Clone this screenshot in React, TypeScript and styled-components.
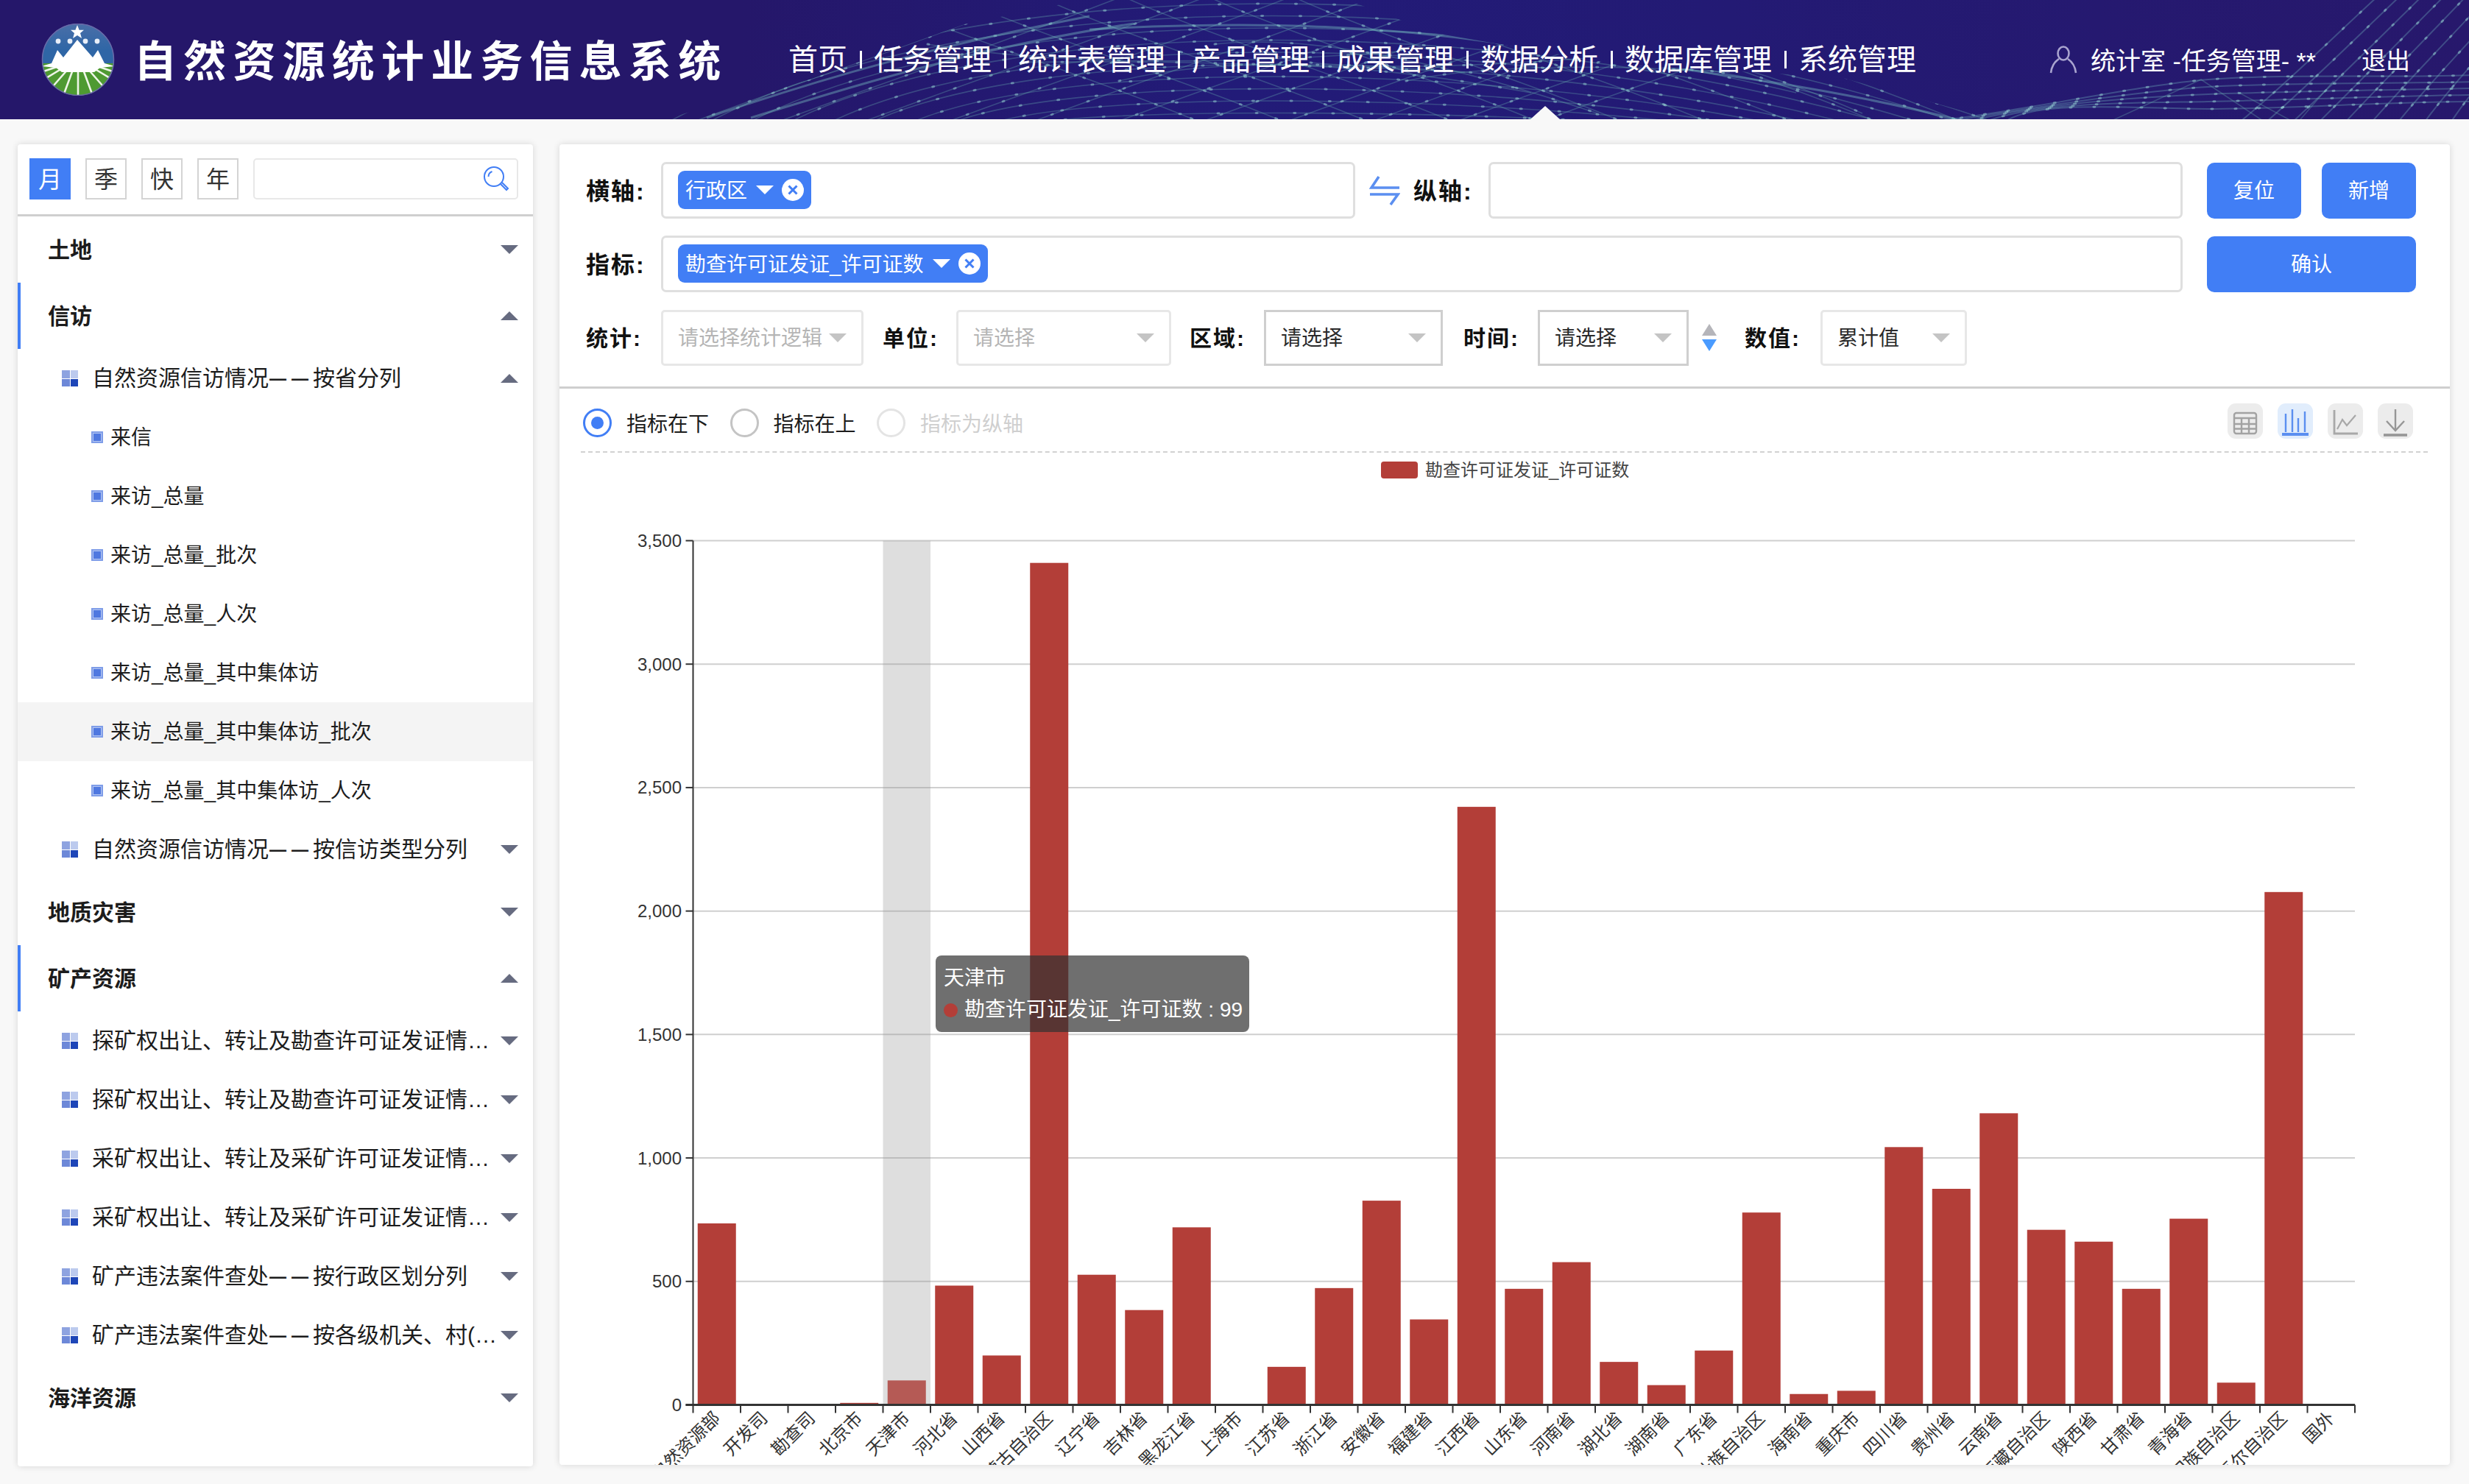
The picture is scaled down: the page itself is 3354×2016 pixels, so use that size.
import React from 'react';
import styled, { createGlobalStyle } from 'styled-components';

const GlobalStyle = createGlobalStyle`
  html, body {
    margin: 0;
    padding: 0;
    background: #f8f8f8;
    font-family: "Liberation Sans", "Noto Sans CJK SC", sans-serif;
    color: #222;
  }
  * { box-sizing: border-box; }
`;

const BLUE = '#417ef5';
const BAR = '#b33e38';

const Page = styled.div`
  width: 3354px;
  height: 2016px;
  overflow: hidden;
`;

const Header = styled.header`
  position: relative;
  height: 162px;
  display: flex;
  align-items: center;
  padding: 0 80px 0 56px;
  overflow: hidden;
  color: #fff;
  background: linear-gradient(90deg, #25176a 0%, #25176a 30%, #221b78 50%, #231a74 70%, #27186c 100%);
`;

const HeaderArt = styled.svg`
  position: absolute;
  left: 0;
  top: 0;
`;

const LogoBox = styled.div`
  position: relative;
  width: 100px;
  height: 98px;
  flex: none;
`;

const Title = styled.div`
  position: relative;
  width: 889px;
  margin-left: 26px;
  padding-bottom: 4px;
  flex: none;
  font-size: 58px;
  font-weight: 700;
  letter-spacing: 9.2px;
  white-space: nowrap;
`;

const Nav = styled.nav`
  position: relative;
  display: flex;
  align-items: center;
  flex: none;
`;

const NavItem = styled.div<{ $active?: boolean }>`
  position: relative;
  font-size: 40px;
  line-height: 162px;
  white-space: nowrap;
  &::after {
    content: '';
    display: ${(p) => (p.$active ? 'block' : 'none')};
    position: absolute;
    left: 68px;
    bottom: 0;
    border-left: 20px solid transparent;
    border-right: 20px solid transparent;
    border-bottom: 18px solid #f8f8f8;
  }
`;

const NavSep = styled.span`
  width: 3px;
  height: 24px;
  margin: 0 16px 0 17px;
  background: #fff;
  flex: none;
`;

const UserBlock = styled.div`
  position: relative;
  margin-left: auto;
  display: flex;
  align-items: center;
  font-size: 34px;
  white-space: nowrap;
`;

const UserName = styled.span`
  margin-left: 18px;
  padding-bottom: 2px;
`;

const Logout = styled.span`
  margin-left: 62px;
  padding-bottom: 2px;
  font-size: 33px;
`;

const Body = styled.div`
  display: flex;
  align-items: flex-start;
  padding: 34px 0 0 24px;
  gap: 36px;
`;

const Sidebar = styled.aside`
  width: 700px;
  height: 1796px;
  flex: none;
  background: #fff;
  border-radius: 4px;
  box-shadow: 0 0 10px rgba(0, 0, 0, 0.14);
  overflow: hidden;
`;

const SideTop = styled.div`
  display: flex;
  align-items: center;
  height: 98px;
  padding: 20px 20px 22px 16px;
  border-bottom: 3px solid #cfcfcf;
`;

const Period = styled.div<{ $active?: boolean }>`
  width: 56px;
  height: 56px;
  margin-right: 20px;
  padding-bottom: 3px;
  flex: none;
  display: flex;
  align-items: center;
  justify-content: center;
  font-size: 32px;
  color: ${(p) => (p.$active ? '#fff' : '#333')};
  background: ${(p) => (p.$active ? BLUE : '#fff')};
  border: 2px solid ${(p) => (p.$active ? BLUE : '#d4d4d4')};
`;

const SearchBox = styled.div`
  flex: 1;
  height: 56px;
  display: flex;
  align-items: center;
  justify-content: flex-end;
  padding-right: 10px;
  border: 2px solid #e8e8e8;
  border-radius: 5px;
`;

const Row = styled.div<{ $level: 1 | 2 | 3; $bar?: boolean; $hover?: boolean }>`
  display: flex;
  align-items: center;
  height: ${(p) => (p.$level === 1 ? 90 : 80)}px;
  padding-right: 20px;
  padding-left: ${(p) => (p.$level === 1 ? 41 : p.$level === 2 ? 60 : 100)}px;
  font-size: ${(p) => (p.$level === 3 ? 28 : 30)}px;
  font-weight: ${(p) => (p.$level === 1 ? 700 : 400)};
  color: #1c1c1c;
  background: ${(p) => (p.$hover ? '#f4f4f4' : 'transparent')};
  box-shadow: ${(p) => (p.$bar ? `inset 4px 0 0 ${BLUE}` : 'none')};
`;

const RowText = styled.span<{ $level: 1 | 2 | 3 }>`
  flex: 1;
  min-width: 0;
  margin-left: ${(p) => (p.$level === 1 ? 0 : p.$level === 2 ? 19 : 10)}px;
  margin-right: 2px;
  padding-bottom: ${(p) => (p.$level === 2 ? 7 : 4)}px;
  white-space: nowrap;
  overflow: hidden;
  text-overflow: ellipsis;
`;

const Dash = styled.span`
  font-size: 23px;
  font-weight: 700;
  letter-spacing: 7px;
  margin-left: 1px;
  margin-right: -1px;
  vertical-align: 2px;
`;

const Caret = styled.i<{ $up?: boolean }>`
  flex: none;
  width: 0;
  height: 0;
  border-left: 12px solid transparent;
  border-right: 12px solid transparent;
  ${(p) => (p.$up ? 'border-bottom: 12px solid #666b80;' : 'border-top: 12px solid #666b80;')}
`;

const GroupIcon = styled.i`
  flex: none;
  width: 22px;
  height: 22px;
  display: grid;
  grid-template-columns: 1fr 1fr;
  grid-template-rows: 1fr 1fr;
  gap: 1px;
`;

const GroupCell = styled.b<{ $c: string }>`
  background: ${(p) => p.$c};
`;

const LeafIcon = styled.i`
  flex: none;
  width: 16px;
  height: 16px;
  background: #4f78e0;
  border: 2px solid #7f9de8;
  box-shadow: inset 0 0 0 1px #b4c6f2;
`;

const Main = styled.main`
  width: 2568px;
  height: 1794px;
  flex: none;
  display: flex;
  flex-direction: column;
  background: #fff;
  border-radius: 4px;
  box-shadow: 0 0 10px rgba(0, 0, 0, 0.14);
  overflow: hidden;
`;

const Filters = styled.section`
  height: 332px;
  flex: none;
  display: flex;
  flex-direction: column;
  gap: 23px;
  padding: 24px 46px 0 36px;
  border-bottom: 3px solid #cfcfcf;
`;

const FilterRow = styled.div`
  display: flex;
  align-items: center;
  height: 77px;
  flex: none;
`;

const Label = styled.label<{ $w: number; $ml?: number; $size?: number }>`
  width: ${(p) => p.$w}px;
  margin-left: ${(p) => p.$ml || 0}px;
  padding-bottom: 4px;
  flex: none;
  font-size: ${(p) => p.$size || 30}px;
  font-weight: 700;
  letter-spacing: 2px;
  color: #111;
  white-space: nowrap;
`;

const AxisBox = styled.div<{ $w: number }>`
  width: ${(p) => p.$w}px;
  height: 77px;
  flex: none;
  display: flex;
  align-items: center;
  padding-left: 20px;
  border: 3px solid #dfdfdf;
  border-radius: 7px;
`;

const Tag = styled.span`
  display: inline-flex;
  align-items: center;
  height: 52px;
  margin-top: -1px;
  padding: 0 10px;
  background: ${BLUE};
  border-radius: 9px;
  color: #fff;
  font-size: 28px;
  white-space: nowrap;
`;

const TagText = styled.span`
  padding-bottom: 3px;
`;

const TagCaret = styled.i`
  width: 0;
  height: 0;
  margin: 0 11px 0 12px;
  border-left: 12px solid transparent;
  border-right: 12px solid transparent;
  border-top: 12px solid #fff;
`;

const SwapSlot = styled.span`
  width: 42px;
  height: 40px;
  margin: 0 18px 0 19px;
  flex: none;
  display: flex;
`;

const PrimaryButton = styled.button<{ $w: number; $ml: number }>`
  width: ${(p) => p.$w}px;
  height: 76px;
  margin-left: ${(p) => p.$ml}px;
  flex: none;
  padding: 0 0 4px;
  border: 0;
  border-radius: 10px;
  background: ${BLUE};
  color: #fff;
  font-family: inherit;
  font-size: 28px;
`;

const Select = styled.div<{ $w: number; $square?: boolean; $dim?: boolean }>`
  width: ${(p) => p.$w}px;
  height: 76px;
  flex: none;
  display: flex;
  align-items: center;
  justify-content: space-between;
  padding: 0 20px;
  border: ${(p) => (p.$square ? '3px solid #cfcfcf' : '3px solid #e7e7e7')};
  border-radius: ${(p) => (p.$square ? 0 : 5)}px;
  font-size: 28px;
  color: ${(p) => (p.$dim ? '#b5b5b5' : '#2a2a2a')};
  white-space: nowrap;
`;

const SelectText = styled.span`
  padding-bottom: 4px;
`;

const SelectCaret = styled.i`
  flex: none;
  width: 0;
  height: 0;
  border-left: 12px solid transparent;
  border-right: 12px solid transparent;
  border-top: 12px solid #c4c4c4;
`;

const SortArrows = styled.div`
  width: 21px;
  margin-left: 18px;
  flex: none;
  display: flex;
  flex-direction: column;
  gap: 5px;
`;

const SortArrow = styled.i<{ $down?: boolean }>`
  width: 0;
  height: 0;
  border-left: 10.5px solid transparent;
  border-right: 10.5px solid transparent;
  ${(p) => (p.$down ? 'border-top: 16px solid #4a9bff;' : 'border-bottom: 16px solid #b5b5ba;')}
`;

const Toolbar = styled.div`
  height: 87px;
  flex: none;
  margin: 0 30px 0 29px;
  padding: 8px 20px 0 3px;
  display: flex;
  align-items: center;
  border-bottom: 2px dashed #d2d2d2;
`;

const RadioItem = styled.div<{ $off?: boolean }>`
  display: flex;
  align-items: center;
  margin-right: 28.500px;
  font-size: 28px;
  color: ${(p) => (p.$off ? '#cfcfcf' : '#1c1c1c')};
`;

const RadioText = styled.span`
  padding-bottom: 2px;
`;

const RadioDot = styled.i<{ $on?: boolean; $off?: boolean }>`
  width: 39px;
  height: 39px;
  margin-right: 20px;
  flex: none;
  display: flex;
  align-items: center;
  justify-content: center;
  border-radius: 50%;
  border: 3px solid ${(p) => (p.$on ? BLUE : p.$off ? '#e4e4e4' : '#c4c4c4')};
  &::after {
    content: '';
    display: ${(p) => (p.$on ? 'block' : 'none')};
    width: 17px;
    height: 17px;
    border-radius: 50%;
    background: ${BLUE};
  }
`;

const ToolIcons = styled.div`
  margin-left: auto;
  margin-bottom: 5px;
  display: flex;
  gap: 20px;
`;

const ToolIcon = styled.div<{ $active?: boolean }>`
  width: 48px;
  height: 48px;
  border-radius: 11px;
  display: flex;
  background: ${(p) => (p.$active ? '#e1edfc' : '#ececec')};
`;

const ChartWrap = styled.div`
  position: relative;
  flex: 1;
  min-height: 0;
  overflow: hidden;
`;

const ChartSvg = styled.svg`
  display: block;
  font-family: "Liberation Sans", "Noto Sans CJK SC", sans-serif;
`;

const Tooltip = styled.div`
  position: absolute;
  left: 511px;
  top: 683px;
  width: 426px;
  height: 104px;
  padding: 10px 11px;
  border-radius: 8px;
  background: rgba(50, 50, 50, 0.7);
  color: #fff;
  font-size: 28px;
  line-height: 42px;
  white-space: nowrap;
`;

const TipRow = styled.div`
  display: flex;
  align-items: center;
  margin-top: 1px;
`;

const TipDot = styled.i`
  width: 19px;
  height: 19px;
  margin-right: 9px;
  flex: none;
  border-radius: 50%;
  background: ${BAR};
`;

// header background: a net of thin curves with brighter dotted strands
function buildNet() {
  const lines: string[] = [];
  const bright: string[] = [];
  for (let i = 0; i < 10; i++) {
    const top = -50 + i * 22;
    lines.push(`M${900 + i * 55} 170 C${1300 + i * 20} ${top} ${2100 - i * 20} ${top} ${2720 - i * 50} 170`);
  }
  for (let i = 0; i < 12; i++) {
    lines.push(`M${1180 + i * 115} -5 C${1300 + i * 115} 50 ${1500 + i * 115} 110 ${1640 + i * 115} 170`);
    lines.push(`M${2560 - i * 115} -5 C${2420 - i * 115} 50 ${2240 - i * 115} 110 ${2080 - i * 115} 170`);
  }
  for (let i = 0; i < 8; i++) {
    lines.push(`M${1260 + i * 130} ${60 + (i % 3) * 25} Q${1500 + i * 110} ${100 - (i % 4) * 20} ${1900 + i * 90} ${70 + (i % 4) * 28}`);
  }
  bright.push('M960 160 C1120 105 1280 60 1480 22');
  bright.push('M1020 160 C1180 110 1340 62 1540 32');
  bright.push('M1480 40 C1700 28 1900 32 2120 72 C2300 95 2500 120 2680 168');
  const right: string[] = [];
  for (let i = 0; i < 5; i++) {
    right.push(`M${2600 + i * 30} 168 C2760 ${150 - i * 4} 2900 ${116 + i * 8} 3000 ${108 + i * 10} S3250 ${106 + i * 8} 3360 ${102 + i * 9}`);
  }
  for (let i = 0; i < 9; i++) {
    right.push(`M${3040 + i * 36} 168 C${3110 + i * 32} 110 ${3170 + i * 32} 50 ${3230 + i * 30} -5`);
  }
  return { lines, bright, right };
}

function HeaderNet() {
  const { lines, bright, right } = buildNet();
  return (
    <HeaderArt width="3354" height="162" viewBox="0 0 3354 162" fill="none">
      <defs>
        <clipPath id="netArea">
          <path d="M890 165 L1100 108 L1310 33 L1470 0 L1830 0 L1950 45 L2200 88 L2500 105 L2720 165 Z" />
        </clipPath>
      </defs>
      <g clipPath="url(#netArea)">
        {lines.map((d) => (
          <path key={d} d={d} stroke="#6db8b4" strokeOpacity="0.3" strokeWidth="1.6" />
        ))}
        {lines.map((d) => (
          <path key={`dot-${d}`} d={d} stroke="#a6e6e0" strokeOpacity="0.45" strokeWidth="3" strokeDasharray="2 50" strokeLinecap="round" />
        ))}
        {bright.map((d) => (
          <path key={d} d={d} stroke="#7cc8c6" strokeOpacity="0.4" strokeWidth="3" />
        ))}
      </g>
      {right.map((d) => (
        <path key={d} d={d} stroke="#7cc8c6" strokeOpacity="0.3" strokeWidth="2" />
      ))}
      {right.map((d) => (
        <path key={`dot-${d}`} d={d} stroke="#a6e6e0" strokeOpacity="0.45" strokeWidth="3" strokeDasharray="2 30" strokeLinecap="round" />
      ))}
      <path d="M2860 168 L2990 108 L3080 168 M3040 125 L3120 168 L3170 110" stroke="#6db8b4" strokeOpacity="0.3" strokeWidth="1.6" />
    </HeaderArt>
  );
}

function Logo() {
  return (
    <LogoBox>
      <svg width="100" height="98" viewBox="0 0 100 98">
        <defs>
          <linearGradient id="sky" x1="0" y1="0" x2="0" y2="1">
            <stop offset="0" stopColor="#4a6fa8" />
            <stop offset="0.6" stopColor="#2f66a6" />
          </linearGradient>
          <clipPath id="disc">
            <ellipse cx="50" cy="49" rx="49" ry="49" />
          </clipPath>
        </defs>
        <g clipPath="url(#disc)">
          <rect width="100" height="60" fill="url(#sky)" />
          <rect y="54" width="100" height="44" fill="#4e9a32" />
          <g stroke="#eef5e8" strokeWidth="2.6">
            <path d="M50 60 L50 98 M44 60 L30 98 M56 60 L70 98 M38 60 L10 92 M62 60 L90 92 M30 60 L0 78 M70 60 L100 78 M24 58 L0 66 M76 58 L100 66" />
          </g>
          <polygon points="0,58 14,54 22,36 30,46 49,22 70,46 77,36 86,54 100,58 80,60 72,66 28,66 20,60" fill="#fff" />
          <polygon points="49,2 51.6,8.8 58,8.8 53,13 55,20 49,16 43,20 45,13 40,8.8 46.4,8.8" fill="#fff" />
          <g fill="#e8eef8">
            <circle cx="23" cy="24" r="3.4" />
            <circle cx="39" cy="24" r="3.4" />
            <circle cx="60" cy="24" r="3.4" />
            <circle cx="76" cy="24" r="3.4" />
          </g>
        </g>
        <ellipse cx="50" cy="49" rx="48.5" ry="48.5" fill="none" stroke="#6a6aa8" strokeWidth="1.5" />
      </svg>
    </LogoBox>
  );
}

function UserIcon() {
  return (
    <svg width="38" height="38" viewBox="0 0 38 38" fill="none" stroke="#a9a4cf" strokeWidth="2.6">
      <ellipse cx="19" cy="10.5" rx="7.5" ry="9" />
      <path d="M13 18 C7 22 3 28 2 37 M25 18 C31 22 35 28 36 37" />
    </svg>
  );
}

function SearchIcon() {
  return (
    <svg width="36" height="36" viewBox="0 0 36 36" fill="none" stroke={BLUE} strokeWidth="2">
      <circle cx="15" cy="15" r="13" />
      <path d="M7.5 15 a7.5 7.5 0 0 1 5 -7" />
      <path d="M24 25 L32 33 L34 31 L26 23" />
    </svg>
  );
}

function SwapIcon() {
  return (
    <svg width="42" height="40" viewBox="0 0 42 40" fill="none" stroke="#5b8ff0" strokeWidth="3.6">
      <path d="M41 16 H3 L13 1" />
      <path d="M1 25 H39 L29 39" />
    </svg>
  );
}

function TagClose() {
  return (
    <svg width="30" height="30" viewBox="0 0 30 30">
      <circle cx="15" cy="15" r="15" fill="#fff" />
      <path d="M9.5 9.5 L20.5 20.5 M20.5 9.5 L9.5 20.5" stroke={BLUE} strokeWidth="3" />
    </svg>
  );
}

function TableIcon() {
  return (
    <svg width="48" height="48" viewBox="0 0 48 48" fill="none" stroke="#a2a2a2" strokeWidth="2.4">
      <rect x="9" y="13" width="30" height="28" rx="3" />
      <path d="M9 20 H39 M9 28 H39 M9 34.500 H39 M19 20 V41 M29 20 V41" />
    </svg>
  );
}

function BarsIcon() {
  return (
    <svg width="48" height="48" viewBox="0 0 48 48" fill="none" stroke="#5b8ff0">
      <path d="M11 39 V14 M20 39 V8 M28 39 V20 M37 39 V11" strokeWidth="2.4" />
      <path d="M6 42 H42" strokeWidth="4" />
    </svg>
  );
}

function LineIcon() {
  return (
    <svg width="48" height="48" viewBox="0 0 48 48" fill="none" stroke="#a8a8a8" strokeWidth="2.2">
      <path d="M9 9 V41 H41" strokeWidth="2.8" />
      <path d="M13 35 L20 22 L26 30 L38 16" />
    </svg>
  );
}

function DownloadIcon() {
  return (
    <svg width="48" height="48" viewBox="0 0 48 48" fill="none" stroke="#969696" strokeWidth="2.4">
      <path d="M24 8 V37 M12 24 L24 37 L36 24" />
      <path d="M8 43 H40" strokeWidth="3.6" />
    </svg>
  );
}

type Item = { level: 1 | 2 | 3; text: string; open?: boolean; bar?: boolean; hover?: boolean };

const tree: Item[] = [
  { level: 1, text: '土地' },
  { level: 1, text: '信访', open: true, bar: true },
  { level: 2, text: '自然资源信访情况——按省分列', open: true },
  { level: 3, text: '来信' },
  { level: 3, text: '来访_总量' },
  { level: 3, text: '来访_总量_批次' },
  { level: 3, text: '来访_总量_人次' },
  { level: 3, text: '来访_总量_其中集体访' },
  { level: 3, text: '来访_总量_其中集体访_批次', hover: true },
  { level: 3, text: '来访_总量_其中集体访_人次' },
  { level: 2, text: '自然资源信访情况——按信访类型分列' },
  { level: 1, text: '地质灾害' },
  { level: 1, text: '矿产资源', open: true, bar: true },
  { level: 2, text: '探矿权出让、转让及勘查许可证发证情况——按行政区划分列' },
  { level: 2, text: '探矿权出让、转让及勘查许可证发证情况——按矿种分列' },
  { level: 2, text: '采矿权出让、转让及采矿许可证发证情况——按行政区划分列' },
  { level: 2, text: '采矿权出让、转让及采矿许可证发证情况——按矿种分列' },
  { level: 2, text: '矿产违法案件查处——按行政区划分列' },
  { level: 2, text: '矿产违法案件查处——按各级机关、村(组)分列' },
  { level: 1, text: '海洋资源' },
];

const navItems = ['首页', '任务管理', '统计表管理', '产品管理', '成果管理', '数据分析', '数据库管理', '系统管理'];

const chartData: [string, number][] = [
  ['自然资源部', 735], ['开发司', 0], ['勘查司', 0], ['北京市', 8], ['天津市', 99], ['河北省', 483], ['山西省', 200],
  ['内蒙古自治区', 3410], ['辽宁省', 527], ['吉林省', 384], ['黑龙江省', 719], ['上海市', 0], ['江苏省', 154],
  ['浙江省', 473], ['安徽省', 827], ['福建省', 346], ['江西省', 2422], ['山东省', 470], ['河南省', 578],
  ['湖北省', 174], ['湖南省', 80], ['广东省', 220], ['广西壮族自治区', 779], ['海南省', 44], ['重庆市', 57],
  ['四川省', 1044], ['贵州省', 875], ['云南省', 1181], ['西藏自治区', 709], ['陕西省', 661], ['甘肃省', 470],
  ['青海省', 754], ['宁夏回族自治区', 90], ['新疆维吾尔自治区', 2077], ['国外', 0],
];

const AXIS_X = 941.5;
const AXIS_RIGHT = 3199;
const ZERO_Y = 1910.5;
const TOP_Y = 736.5;
const STEP = (AXIS_RIGHT - AXIS_X) / chartData.length;
const yOf = (v: number) => ZERO_Y - (v / 3500) * (ZERO_Y - TOP_Y);

function BarChart() {
  const ticks = [0, 500, 1000, 1500, 2000, 2500, 3000, 3500];
  return (
    <ChartSvg width="2568" height="1375" viewBox="760 617 2568 1375">
      <rect x="1876" y="629" width="50" height="23" rx="4" fill={BAR} />
      <text x="1936" y="640" fontSize="24" fill="#444" dominantBaseline="central">勘查许可证发证_许可证数</text>
      {ticks.map((t) => (
        <g key={t}>
          {t > 0 && <line x1={AXIS_X} x2={AXIS_RIGHT} y1={yOf(t)} y2={yOf(t)} stroke="#cfcfcf" strokeWidth="2" />}
          <line x1={AXIS_X - 10} x2={AXIS_X} y1={yOf(t)} y2={yOf(t)} stroke="#333" strokeWidth="2" />
          <text x="926" y={yOf(t)} fontSize="24" fill="#333" textAnchor="end" dominantBaseline="central">
            {t.toLocaleString('en-US')}
          </text>
        </g>
      ))}
      <rect x={AXIS_X + STEP * 4} y={TOP_Y} width={STEP} height={ZERO_Y - TOP_Y} fill="#969696" fillOpacity="0.31" />
      {chartData.map(([name, v], i) => (
        v > 0 && (
          <rect
            key={name}
            x={AXIS_X + STEP * i + 6.25}
            y={yOf(v)}
            width="52"
            height={ZERO_Y - yOf(v)}
            fill={i === 4 ? '#b55a55' : BAR}
          />
        )
      ))}
      <line x1={AXIS_X} x2={AXIS_X} y1={TOP_Y} y2={ZERO_Y} stroke="#333" strokeWidth="2" />
      <line x1={AXIS_X - 10} x2={AXIS_RIGHT} y1={ZERO_Y} y2={ZERO_Y} stroke="#333" strokeWidth="3" />
      {chartData.map(([name], i) => (
        <line key={name} x1={AXIS_X + STEP * i} x2={AXIS_X + STEP * i} y1={ZERO_Y} y2={ZERO_Y + 11} stroke="#333" strokeWidth="2" />
      ))}
      <line x1={AXIS_RIGHT} x2={AXIS_RIGHT} y1={ZERO_Y} y2={ZERO_Y + 11} stroke="#333" strokeWidth="2" />
      {chartData.map(([name], i) => {
        const cx = AXIS_X + STEP * (i + 0.5) + 6;
        return (
          <text key={name} x={cx} y={1930} fontSize="24" fill="#333" textAnchor="end" transform={`rotate(-45 ${cx} 1930)`}>
            {name}
          </text>
        );
      })}
    </ChartSvg>
  );
}

function TreeText({ text }: { text: string }) {
  const parts = text.split('——');
  if (parts.length < 2) return <>{text}</>;
  return (
    <>
      {parts[0]}
      <Dash>——</Dash>
      {parts[1]}
    </>
  );
}

function App() {
  return (
    <Page>
      <GlobalStyle />
      <Header>
        <HeaderNet />
        <Logo />
        <Title>自然资源统计业务信息系统</Title>
        <Nav>
          {navItems.map((item, i) => (
            <React.Fragment key={item}>
              {i > 0 && <NavSep />}
              <NavItem $active={item === '数据分析'}>{item}</NavItem>
            </React.Fragment>
          ))}
        </Nav>
        <UserBlock>
          <UserIcon />
          <UserName>统计室 -任务管理- **</UserName>
          <Logout>退出</Logout>
        </UserBlock>
      </Header>
      <Body>
        <Sidebar>
          <SideTop>
            <Period $active>月</Period>
            <Period>季</Period>
            <Period>快</Period>
            <Period>年</Period>
            <SearchBox>
              <SearchIcon />
            </SearchBox>
          </SideTop>
          {tree.map((item) => (
            <Row key={item.text} $level={item.level} $bar={item.bar} $hover={item.hover}>
              {item.level === 2 && (
                <GroupIcon>
                  <GroupCell $c="#8ea3e0" />
                  <GroupCell $c="#bccaee" />
                  <GroupCell $c="#6d88d8" />
                  <GroupCell $c="#1e46b8" />
                </GroupIcon>
              )}
              {item.level === 3 && <LeafIcon />}
              <RowText $level={item.level}><TreeText text={item.text} /></RowText>
              {item.level !== 3 && <Caret $up={item.open} />}
            </Row>
          ))}
        </Sidebar>
        <Main>
          <Filters>
            <FilterRow>
              <Label $w={102} $size={32}>横轴:</Label>
              <AxisBox $w={943}>
                <Tag><TagText>行政区</TagText><TagCaret /><TagClose /></Tag>
              </AxisBox>
              <SwapSlot><SwapIcon /></SwapSlot>
              <Label $w={102} $size={32}>纵轴:</Label>
              <AxisBox $w={943} />
              <PrimaryButton $w={128} $ml={33}>复位</PrimaryButton>
              <PrimaryButton $w={128} $ml={28}>新增</PrimaryButton>
            </FilterRow>
            <FilterRow>
              <Label $w={102} $size={32}>指标:</Label>
              <AxisBox $w={2067}>
                <Tag><TagText>勘查许可证发证_许可证数</TagText><TagCaret /><TagClose /></Tag>
              </AxisBox>
              <PrimaryButton $w={284} $ml={33}>确认</PrimaryButton>
            </FilterRow>
            <FilterRow>
              <Label $w={102}>统计:</Label>
              <Select $w={275} $dim><SelectText>请选择统计逻辑</SelectText><SelectCaret /></Select>
              <Label $w={100} $ml={26}>单位:</Label>
              <Select $w={292} $dim><SelectText>请选择</SelectText><SelectCaret /></Select>
              <Label $w={101} $ml={25}>区域:</Label>
              <Select $w={243} $square><SelectText>请选择</SelectText><SelectCaret /></Select>
              <Label $w={101} $ml={28}>时间:</Label>
              <Select $w={205} $square><SelectText>请选择</SelectText><SelectCaret /></Select>
              <SortArrows>
                <SortArrow />
                <SortArrow $down />
              </SortArrows>
              <Label $w={103} $ml={37}>数值:</Label>
              <Select $w={199}><SelectText>累计值</SelectText><SelectCaret /></Select>
            </FilterRow>
          </Filters>
          <Toolbar>
            <RadioItem><RadioDot $on /><RadioText>指标在下</RadioText></RadioItem>
            <RadioItem><RadioDot /><RadioText>指标在上</RadioText></RadioItem>
            <RadioItem $off><RadioDot $off /><RadioText>指标为纵轴</RadioText></RadioItem>
            <ToolIcons>
              <ToolIcon><TableIcon /></ToolIcon>
              <ToolIcon $active><BarsIcon /></ToolIcon>
              <ToolIcon><LineIcon /></ToolIcon>
              <ToolIcon><DownloadIcon /></ToolIcon>
            </ToolIcons>
          </Toolbar>
          <ChartWrap>
            <BarChart />
            <Tooltip>
              天津市
              <TipRow><TipDot />勘查许可证发证_许可证数 : 99</TipRow>
            </Tooltip>
          </ChartWrap>
        </Main>
      </Body>
    </Page>
  );
}

export default App;
